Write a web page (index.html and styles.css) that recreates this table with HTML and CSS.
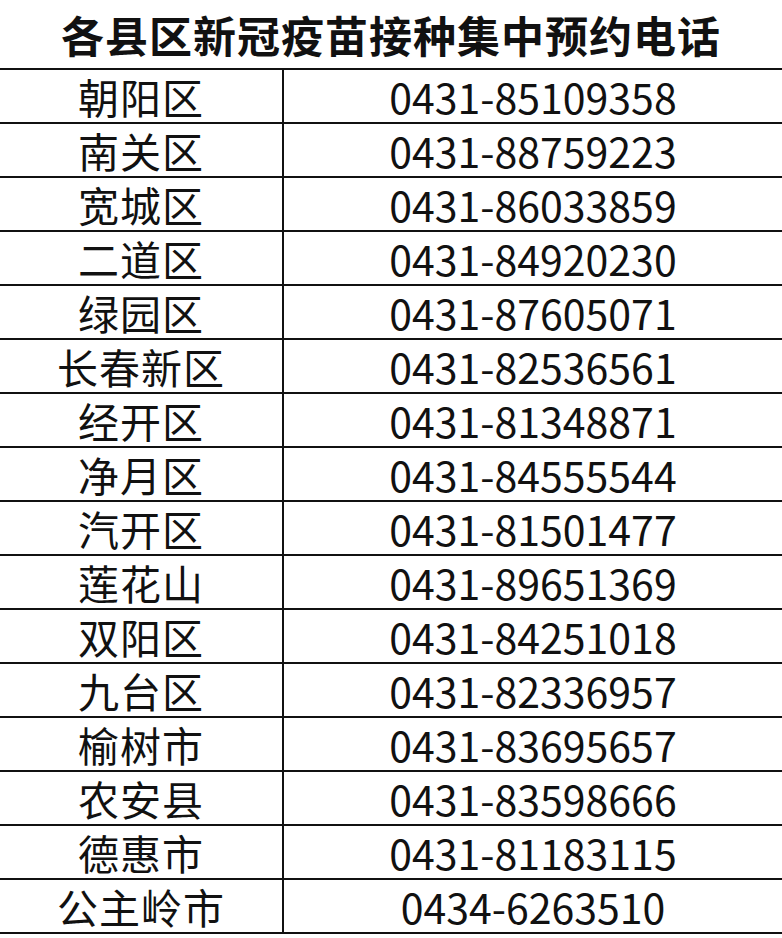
FILE: index.html
```html
<!DOCTYPE html>
<html lang="zh-CN">
<head>
<meta charset="utf-8">
<title>各县区新冠疫苗接种集中预约电话</title>
<link rel="stylesheet" href="styles.css">
</head>
<body>
<div class="page">
  <h1 class="title">各县区新冠疫苗接种集中预约电话</h1>
  <div class="table">
    <div class="row"><div class="name">朝阳区</div><div class="phone">0431-85109358</div></div>
    <div class="row"><div class="name">南关区</div><div class="phone">0431-88759223</div></div>
    <div class="row"><div class="name">宽城区</div><div class="phone">0431-86033859</div></div>
    <div class="row"><div class="name">二道区</div><div class="phone">0431-84920230</div></div>
    <div class="row"><div class="name">绿园区</div><div class="phone">0431-87605071</div></div>
    <div class="row"><div class="name">长春新区</div><div class="phone">0431-82536561</div></div>
    <div class="row"><div class="name">经开区</div><div class="phone">0431-81348871</div></div>
    <div class="row"><div class="name">净月区</div><div class="phone">0431-84555544</div></div>
    <div class="row"><div class="name">汽开区</div><div class="phone">0431-81501477</div></div>
    <div class="row"><div class="name">莲花山</div><div class="phone">0431-89651369</div></div>
    <div class="row"><div class="name">双阳区</div><div class="phone">0431-84251018</div></div>
    <div class="row"><div class="name">九台区</div><div class="phone">0431-82336957</div></div>
    <div class="row"><div class="name">榆树市</div><div class="phone">0431-83695657</div></div>
    <div class="row"><div class="name">农安县</div><div class="phone">0431-83598666</div></div>
    <div class="row"><div class="name">德惠市</div><div class="phone">0431-81183115</div></div>
    <div class="row"><div class="name">公主岭市</div><div class="phone">0434-6263510</div></div>
  </div>
</div>
</body>
</html>
```
FILE: styles.css
```css
html, body {
  margin: 0;
  padding: 0;
  background: #ffffff;
}
body {
  font-family: "Noto Sans CJK SC", "Noto Sans", sans-serif;
  color: #111111;
}
.page {
  width: 782px;
}
.title {
  margin: 0;
  height: 68px;
  display: flex;
  align-items: center;
  justify-content: center;
  font-size: 43px;
  font-weight: 700;
  letter-spacing: 1px;
  line-height: 1;
}
.table {
  border-top: 2px solid #111;
}
.row {
  display: grid;
  grid-template-columns: 282px 1fr;
  height: 52px;
  border-bottom: 2px solid #111;
}
.name, .phone {
  display: flex;
  align-items: center;
  justify-content: center;
  line-height: 1;
}
.name {
  font-size: 41px;
  letter-spacing: 1px;
}
.phone {
  border-left: 2px solid #111;
  font-size: 41px;
}
```
